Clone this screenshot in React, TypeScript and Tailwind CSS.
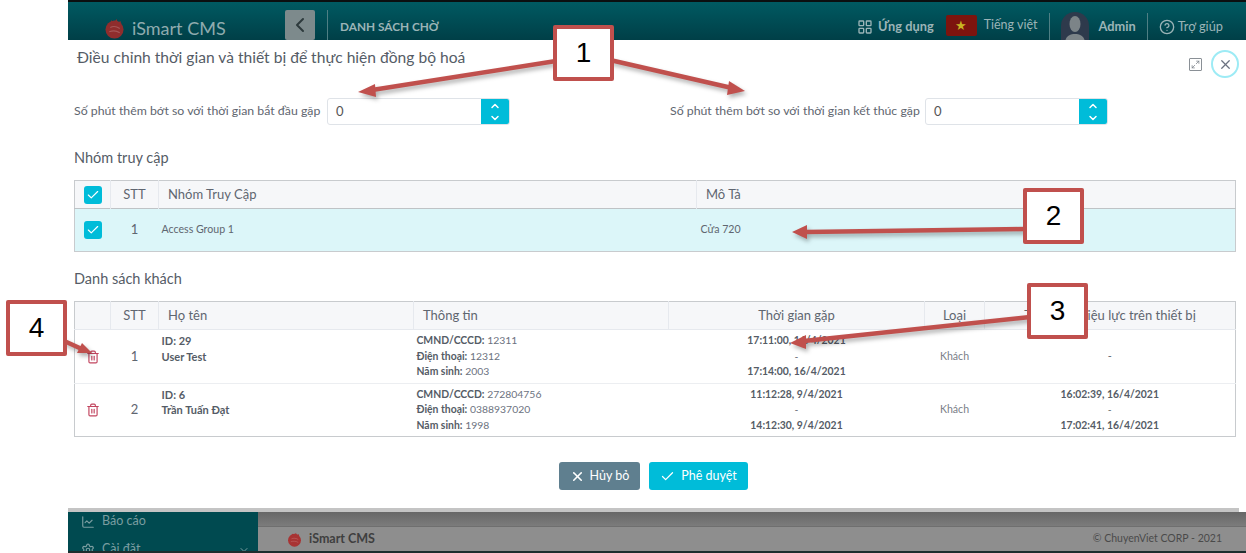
import { Check, ChevronDown, ChevronLeft, ChevronUp, CircleHelp, LayoutGrid, Maximize2, Trash2, X, ChartLine, Settings } from "lucide-react";

const Logo = ({ size, color }: { size: number; color: string }) => (
  <svg width={size} height={size} viewBox="0 0 20 20">
    <circle cx="10" cy="11" r="8.6" fill={color} />
    <path d="M4 5 6 7 7 2 9 5 12 1 13 4 16 3 16 7 10 8Z" fill={color} />
    <path d="M6 9C8 8 12 8 15 10M5 13C8 12 12 12 15 14" stroke="#ffffff" strokeOpacity="0.2" strokeWidth="1" fill="none" />
  </svg>
);

const NumberField = ({ label, labelW }: { label: string; labelW: string }) => (
  <div className="flex items-center gap-[6px]">
    <span className={`${labelW} text-[12.3px] text-[#5f6670] whitespace-nowrap`}>{label}</span>
    <div className="flex h-[27px] w-[183px] rounded-[3px] border border-[#dfe3e8] overflow-hidden">
      <span className="flex-1 pl-[8px] text-[13px] leading-[25px] text-[#555]">0</span>
      <span className="w-[28px] bg-[#00bcd9] text-white flex flex-col items-center justify-center">
        <ChevronUp size={12} strokeWidth={3} />
        <ChevronDown size={12} strokeWidth={3} />
      </span>
    </div>
  </div>
);

const Box = () => (
  <span className="w-[18px] h-[18px] rounded-[3px] bg-[#00bcd9] flex items-center justify-center text-white">
    <Check size={14} strokeWidth={2} />
  </span>
);

const Th = ({ className = "", children }: { className?: string; children?: React.ReactNode }) => (
  <th className={`border-r border-[#e6e9ee] last:border-r-0 font-normal text-[13px] text-[#5f6670] ${className}`}>{children}</th>
);

const guests = [
  { stt: 1, id: "ID: 29", name: "User Test", cmnd: "12311", phone: "12312", year: "2003", meet: ["17:11:00, 16/4/2021", "17:14:00, 16/4/2021"], valid: null as string[] | null, h: "h-[54px]" },
  { stt: 2, id: "ID: 6", name: "Trần Tuấn Đạt", cmnd: "272804756", phone: "0388937020", year: "1998", meet: ["11:12:28, 9/4/2021", "14:12:30, 9/4/2021"], valid: ["16:02:39, 16/4/2021", "17:02:41, 16/4/2021"], h: "h-[53px]" },
];

const Range = ({ v }: { v: string[] }) => (
  <div className="font-bold text-[#555c66] text-[10.4px] leading-[15.6px]">
    <div>{v[0]}</div>
    <div className="font-normal">-</div>
    <div>{v[1]}</div>
  </div>
);

const Callout = ({ n, className }: { n: string; className: string }) => (
  <div className={`absolute bg-white border-[4px] border-[#c0504d] rounded-[2px] flex items-center justify-center text-black text-[28px] font-['Liberation_Sans',sans-serif] ${className}`}>{n}</div>
);

export default function App() {
  return (
    <div className="relative w-[1246px] h-[553px] overflow-hidden bg-white flex font-['Lato','Noto_Sans',sans-serif]">
      <div className="w-[68px] shrink-0" />
      <div className="flex-1 flex flex-col min-w-0">
        <div className="h-[2px] bg-[#0b0f10]" />
        {/* App header */}
        <header className="h-[38px] pt-[12px] bg-gradient-to-b from-[#005a62] to-[#003f47] flex items-center text-[#9bb4b7]">
          <div className="w-[217px] pl-[36px] mt-[2px] flex items-center gap-[7px]">
            <Logo size={21} color="#8f2d2d" />
            <span className="text-[18px] text-[#8fabae]">iSmart CMS</span>
          </div>
          <div className="w-[30px] h-[30px] -mt-[4px] bg-[#7d8a8c] rounded-[2px] flex items-center justify-center text-[#2d3a3c]">
            <ChevronLeft size={24} />
          </div>
          <div className="ml-[12px] h-[30px] -mt-[4px] border-l border-[#4f7f84]" />
          <span className="ml-[12px] font-bold text-[11.8px]">DANH SÁCH CHỜ</span>
          <div className="ml-auto flex items-center">
            <LayoutGrid size={16} />
            <span className="ml-[5px] text-[12.8px] font-bold">Ứng dụng</span>
            <span className="ml-[12px] w-[31px] h-[21px] -mt-[3px] bg-[#7d140e] rounded-[2px] flex items-center justify-center text-[#c8b422] text-[13px]">★</span>
            <span className="ml-[7px] mb-[4px] text-[12.5px]">Tiếng việt</span>
            <span className="ml-[12px] h-[28px] border-l border-[#4f7f84]" />
            <span className="ml-[11px] w-[28px] h-[30px] rounded-t-full bg-[#2e3a4c] flex items-end justify-center overflow-hidden">
              <svg width="20" height="28" viewBox="0 0 20 28"><ellipse cx="10" cy="10" rx="5.5" ry="8" fill="#7c8488" /><path d="M0 28C1 21 6 20 10 20s9 1 10 8Z" fill="#7c8488" /></svg>
            </span>
            <span className="ml-[9px] text-[12.8px] font-bold">Admin</span>
            <span className="ml-[11px] h-[28px] border-l border-[#4f7f84]" />
            <CircleHelp size={16} className="ml-[11px]" />
            <span className="ml-[3px] mr-[23px] text-[12.8px]">Trợ giúp</span>
          </div>
        </header>

        {/* Modal */}
        <main className="h-[468px] bg-white rounded-t-[4px] relative z-10 pl-[6px] pr-[10px] flex flex-col">
          <div className="flex items-start justify-between">
            <h2 className="mt-[7px] ml-[3px] text-[15.6px] leading-[20px] text-[#555c66]">Điều chỉnh thời gian và thiết bị để thực hiện đồng bộ hoá</h2>
            <div className="mt-[10px] mr-[-3px] flex items-center gap-[9px]">
              <Maximize2 size={12} className="text-[#7a8088] border border-[#8a9096] rounded-[1px] p-[1px] w-[13px] h-[13px]" />
              <span className="w-[28px] h-[28px] rounded-full border-2 border-[#9debf5] flex items-center justify-center text-[#6b7280]">
                <X size={15} />
              </span>
            </div>
          </div>

          <div className="mt-[20px] flex">
            <div className="w-[596px]"><NumberField label="Số phút thêm bớt so với thời gian bắt đầu gặp" labelW="w-[247px]" /></div>
            <NumberField label="Số phút thêm bớt so với thời gian kết thúc gặp" labelW="w-[249px]" />
          </div>

          <h3 className="mt-[23px] text-[14.5px] leading-[20px] text-[#555c66]">Nhóm truy cập</h3>
          <table className="mt-[12px] w-[1162px] table-fixed border-collapse border border-[#c8cbce]">
            <colgroup>
              <col className="w-[36px]" /><col className="w-[48px]" /><col className="w-[538px]" /><col />
            </colgroup>
            <thead>
              <tr className="h-[28px] bg-[#f6f7f9] border-b border-[#bfc3c6]">
                <Th><span className="flex justify-center"><Box /></span></Th>
                <Th>STT</Th>
                <Th className="text-left pl-[9px]">Nhóm Truy Cập</Th>
                <Th className="text-left pl-[9px]">Mô Tả</Th>
              </tr>
            </thead>
            <tbody>
              <tr className="h-[43px] bg-[#dcf6f9]">
                <td><span className="flex justify-center"><Box /></span></td>
                <td className="text-center text-[13px] text-[#5f6670]">1</td>
                <td className="pl-[3px] text-[10.6px] text-[#5f6670]">Access Group 1</td>
                <td className="pl-[4px] text-[10.6px] text-[#5f6670]">Cửa 720</td>
              </tr>
            </tbody>
          </table>

          <h3 className="mt-[17px] text-[14.5px] leading-[20px] text-[#555c66]">Danh sách khách</h3>
          <table className="mt-[12px] w-[1162px] table-fixed border-collapse border border-[#c8cbce]">
            <colgroup>
              <col className="w-[36px]" /><col className="w-[48px]" /><col className="w-[255px]" /><col className="w-[255px]" /><col className="w-[256px]" /><col className="w-[60px]" /><col />
            </colgroup>
            <thead>
              <tr className="h-[28px] bg-[#f6f7f9] border-b border-[#e6e9ee]">
                <Th />
                <Th>STT</Th>
                <Th className="text-left pl-[9px]">Họ tên</Th>
                <Th className="text-left pl-[9px]">Thông tin</Th>
                <Th>Thời gian gặp</Th>
                <Th>Loại</Th>
                <Th>Thời gian hiệu lực trên thiết bị</Th>
              </tr>
            </thead>
            <tbody>
              {guests.map((g) => (
                <tr key={g.stt} className={`${g.h} border-b border-[#eceef1] last:border-b-0`}>
                  <td><span className="flex justify-center text-[#c2455f]"><Trash2 size={14} /></span></td>
                  <td className="text-center text-[13px] text-[#5f6670]">{g.stt}</td>
                  <td className="pl-[3px] text-[11px] font-bold leading-[15.6px] text-[#555c66]">
                    <div>{g.id}</div>
                    <div>{g.name}</div>
                    <div>&nbsp;</div>
                  </td>
                  <td className="pl-[3px] text-[10.4px] leading-[15.6px] text-[#6b7280]">
                    <div><b className="text-[#555c66]">CMND/CCCD:</b> {g.cmnd}</div>
                    <div><b className="text-[#555c66]">Điện thoại:</b> {g.phone}</div>
                    <div><b className="text-[#555c66]">Năm sinh:</b> {g.year}</div>
                  </td>
                  <td className="text-center"><Range v={g.meet} /></td>
                  <td className="text-center text-[10.6px] text-[#7a8088]">Khách</td>
                  <td className="text-center text-[11px] text-[#5f6670]">{g.valid ? <Range v={g.valid} /> : "-"}</td>
                </tr>
              ))}
            </tbody>
          </table>

          <div className="mt-[25px] flex justify-center gap-[9px] pr-[3px]">
            <button className="h-[28px] w-[81px] rounded-[3px] bg-[#5f7f8f] text-white text-[12.5px] flex items-center justify-center gap-[5px]">
              <X size={15} strokeWidth={2.5} />Hủy bỏ
            </button>
            <button className="h-[28px] w-[99px] rounded-[3px] bg-[#00bcd9] text-white text-[12.5px] flex items-center justify-center gap-[6px]">
              <Check size={15} />Phê duyệt
            </button>
          </div>
        </main>

        {/* Dimmed page beneath */}
        <div className="h-[4px] bg-[#c4c4c4] mr-[7px] relative z-10" />
        <div className="flex-1 flex min-h-0">
          <aside className="w-[190px] bg-[#004a50] text-[#7a9da0] text-[12.5px] pl-[13px] pt-[1px] overflow-hidden">
            <div className="flex items-center gap-[7px] h-[17px]"><ChartLine size={14} /><span>Báo cáo</span></div>
            <div className="flex items-center gap-[7px] mt-[11px] h-[17px]"><Settings size={14} /><span>Cài đặt</span><ChevronDown size={12} className="ml-auto mr-[8px]" /></div>
          </aside>
          <div className="flex-1 flex flex-col bg-[#8e8e8e]">
            <div className="h-[15px] bg-gradient-to-b from-[#676767] to-[#7c7c7c] border-b border-[#6f6f6f]" />
            <div className="flex-1 flex items-center justify-between pl-[29px] pr-[24px] text-[#3f3f3f]">
              <span className="flex items-center gap-[7px] text-[12.5px] font-bold"><Logo size={15} color="#a83434" />iSmart CMS</span>
              <span className="text-[10.5px] text-[#4a4a4a]">© ChuyenViet CORP - 2021</span>
            </div>
          </div>
        </div>
        <div className="h-[2px] bg-[#1d2e2e]" />
      </div>

      {/* Annotations laid over the screenshot */}
      <svg className="absolute inset-0 z-20 pointer-events-none drop-shadow-[2px_3px_2px_rgba(0,0,0,0.3)]" width="1246" height="553" viewBox="0 0 1246 553" fill="none">
        <g stroke="#c0504d" strokeWidth="4.5">
          <line x1="556" y1="61" x2="372" y2="90" />
          <line x1="610" y1="60" x2="732" y2="88" />
          <line x1="1026" y1="229" x2="806" y2="232" />
          <line x1="1030" y1="317" x2="804" y2="341" />
          <line x1="62" y1="340" x2="84" y2="350" />
        </g>
        <g fill="#c0504d">
          <path d="M358 92 375 84 376 97Z" />
          <path d="M745 91 729 81 727 95Z" />
          <path d="M792 232 807 225 807 239Z" />
          <path d="M790 343 806 335 806 349Z" />
          <path d="M92 353 82 343 77 353Z" />
        </g>
      </svg>
      <Callout n="1" className="z-30 left-[553px] top-[25px] w-[61px] h-[56px]" />
      <Callout n="2" className="z-30 left-[1023px] top-[188px] w-[61px] h-[56px]" />
      <Callout n="3" className="z-30 left-[1027px] top-[283px] w-[61px] h-[56px]" />
      <Callout n="4" className="z-30 left-[6px] top-[300px] w-[61px] h-[56px]" />
    </div>
  );
}
